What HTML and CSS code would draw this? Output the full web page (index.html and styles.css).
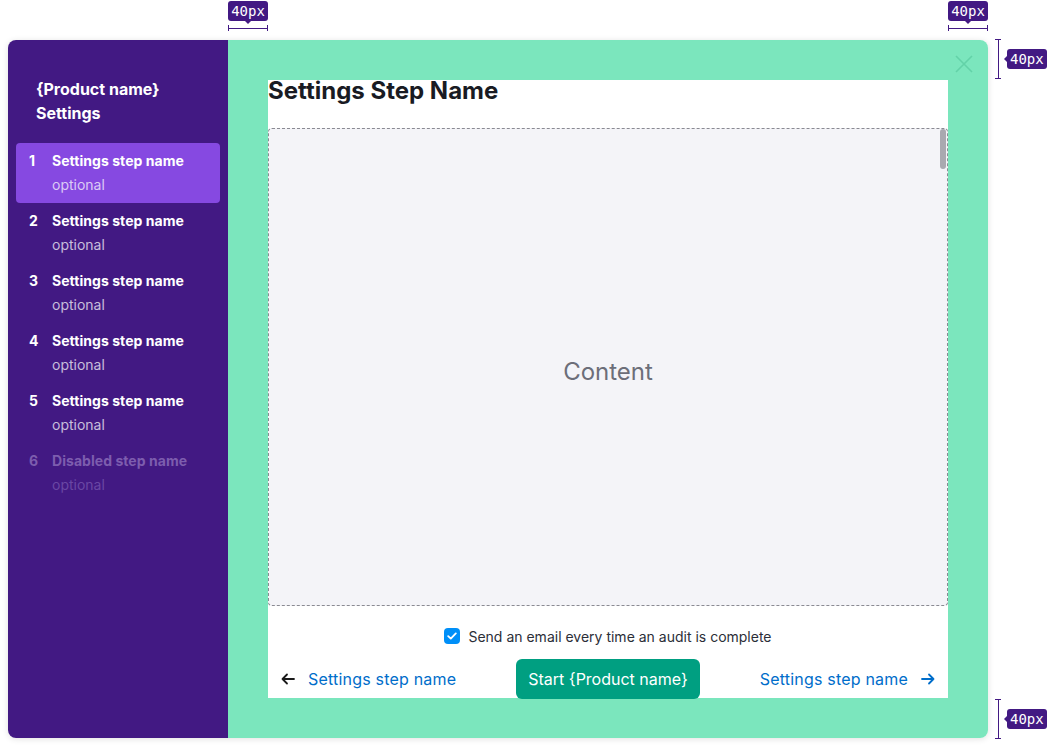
FILE: index.html
```html
<!DOCTYPE html>
<html>
<head>
<meta charset="utf-8">
<link rel="stylesheet" href="styles.css">
</head>
<body>
<div class="page">
  <div class="modal">
    <aside class="sidebar">
      <div class="sb-title">{Product name}<br>Settings</div>
      <ul class="steps">
        <li class="step active"><span class="num">1</span><span class="txt"><span class="name">Settings step name</span><span class="opt">optional</span></span></li>
        <li class="step"><span class="num">2</span><span class="txt"><span class="name">Settings step name</span><span class="opt">optional</span></span></li>
        <li class="step"><span class="num">3</span><span class="txt"><span class="name">Settings step name</span><span class="opt">optional</span></span></li>
        <li class="step"><span class="num">4</span><span class="txt"><span class="name">Settings step name</span><span class="opt">optional</span></span></li>
        <li class="step"><span class="num">5</span><span class="txt"><span class="name">Settings step name</span><span class="opt">optional</span></span></li>
        <li class="step disabled"><span class="num">6</span><span class="txt"><span class="name">Disabled step name</span><span class="opt">optional</span></span></li>
      </ul>
    </aside>
    <main class="panel">
      <button class="close" aria-label="Close">
        <svg width="18" height="18" viewBox="0 0 18 18"><path d="M1 1L17 17M17 1L1 17" stroke="#63d2a8" stroke-width="1.6" fill="none"/></svg>
      </button>
      <div class="inner">
        <h1 class="title">Settings Step Name</h1>
        <div class="content">
          <span class="content-label">Content</span>
          <div class="scrollbar"></div>
        </div>
        <label class="check-row">
          <span class="checkbox"><svg width="10" height="8" viewBox="0 0 10 8"><path d="M1.2 4.2L3.8 6.6L8.8 1.4" stroke="#fff" stroke-width="1.8" fill="none" stroke-linecap="round" stroke-linejoin="round"/></svg></span>
          <span class="check-text">Send an email every time an audit is complete</span>
        </label>
        <div class="actions">
          <a class="link prev"><svg width="16" height="16" viewBox="0 0 16 16"><path d="M14 8H2.5M7 3.5L2.5 8L7 12.5" stroke="#1a1a1a" stroke-width="1.8" fill="none" stroke-linecap="round" stroke-linejoin="round"/></svg><span>Settings step name</span></a>
          <button class="start">Start {Product name}</button>
          <a class="link next"><span>Settings step name</span><svg width="16" height="16" viewBox="0 0 16 16"><path d="M2 8H13.5M9 3.5L13.5 8L9 12.5" stroke="#006dca" stroke-width="1.8" fill="none" stroke-linecap="round" stroke-linejoin="round"/></svg></a>
        </div>
      </div>
    </main>
  </div>

  <div class="anno anno-top anno-top-left">
    <span class="badge badge-down">40px</span>
    <span class="hline"></span>
  </div>
  <div class="anno anno-top anno-top-right">
    <span class="badge badge-down">40px</span>
    <span class="hline"></span>
  </div>
  <div class="anno anno-side anno-side-top">
    <span class="vline"></span>
    <span class="badge badge-left">40px</span>
  </div>
  <div class="anno anno-side anno-side-bottom">
    <span class="vline"></span>
    <span class="badge badge-left">40px</span>
  </div>
</div>
</body>
</html>
```
FILE: styles.css
```css
* { box-sizing: border-box; }
html, body { margin: 0; padding: 0; background: #fff; }
body { font-family: Inter, "Noto Sans", sans-serif; width: 1047px; height: 750px; overflow: hidden; }
.page { position: relative; width: 1047px; height: 750px; padding: 40px 0 0 8px; }

.modal {
  display: flex;
  width: 980px;
  height: 698px;
  border-radius: 8px;
  overflow: hidden;
  box-shadow: 0 1px 6px rgba(0,0,0,0.12);
  position: relative;
}

.sidebar {
  width: 220px;
  flex: none;
  background: #421983;
  color: #fff;
  padding: 37px 8px 0 8px;
}
.sb-title {
  font-size: 16px;
  font-weight: 700;
  line-height: 24px;
  padding-left: 20px;
  margin-bottom: 18px;
}
.steps { list-style: none; margin: 0; padding: 0; }
.step {
  display: flex;
  height: 60px;
  padding: 6px 12px 6px 13px;
  border-radius: 4px;
  font-size: 14px;
  line-height: 24px;
}
.step .num { width: 23px; font-weight: 700; flex: none; }
.step .txt { display: flex; flex-direction: column; }
.step .name { font-weight: 700; letter-spacing: 0.05px; }
.step .opt { color: rgba(255,255,255,0.72); }
.step.active { background: #8649e1; }
.step.disabled { color: #7d5dae; }
.step.disabled .opt { color: #6a47a3; }

.panel {
  flex: 1;
  background: #7be6bd;
  padding: 40px;
  position: relative;
}
.close {
  position: absolute;
  top: 15px;
  right: 15px;
  width: 18px;
  height: 18px;
  padding: 0;
  border: 0;
  background: none;
  display: flex;
}
.inner {
  background: #fff;
  height: 618px;
  display: flex;
  flex-direction: column;
}
.title {
  margin: 0 0 24px 0;
  font-size: 24px;
  line-height: 22px;
  font-weight: 700;
  color: #191b23;
  letter-spacing: 0;
  padding-bottom: 2px;
}
.content {
  flex: 1;
  position: relative;
  background: #f4f4f8;
  border: 1px dashed #8a8a92;
  border-radius: 4px;
  display: flex;
  align-items: center;
  justify-content: center;
}
.content-label { font-size: 24px; color: #6c6e79; padding-top: 8px; }
.scrollbar {
  position: absolute;
  top: 0;
  right: 1px;
  width: 6px;
  height: 40px;
  border-radius: 3px;
  background: #a9a9b0;
}
.check-row {
  margin-top: 20px;
  height: 20px;
  display: flex;
  align-items: center;
  justify-content: center;
  gap: 8px;
  font-size: 14px;
  color: #2b2e38;
}
.checkbox {
  width: 16px;
  height: 16px;
  border-radius: 4px;
  background: #008ff8;
  display: flex;
  align-items: center;
  justify-content: center;
}
.actions {
  margin-top: 12px;
  height: 40px;
  display: grid;
  grid-template-columns: 1fr auto 1fr;
  align-items: center;
  padding-top: 1px;
}
.link {
  display: flex;
  align-items: center;
  gap: 12px;
  color: #006dca;
  font-size: 16px;
  letter-spacing: 0.2px;
}
.link.prev { padding-left: 12px; justify-self: start; }
.link.next { padding-right: 12px; justify-self: end; }
.start {
  height: 40px;
  padding: 0 12px;
  border: 0;
  border-radius: 6px;
  background: #009f81;
  color: #fff;
  font-family: Inter, "Noto Sans", sans-serif;
  font-size: 16px;
  width: 184px;
}

.anno { position: absolute; display: flex; align-items: center; }
.badge {
  position: relative;
  background: #421983;
  color: #fff;
  font-family: "DejaVu Sans Mono", monospace;
  font-size: 14px;
  line-height: 20px;
  height: 20px;
  padding: 0 3px;
  border-radius: 3px;
}
.badge-down::after {
  content: "";
  position: absolute;
  left: 50%;
  bottom: -3px;
  margin-left: -3px;
  border-left: 3px solid transparent;
  border-right: 3px solid transparent;
  border-top: 3px solid #421983;
}
.badge-left::before {
  content: "";
  position: absolute;
  top: 50%;
  left: -3px;
  margin-top: -3px;
  border-top: 3px solid transparent;
  border-bottom: 3px solid transparent;
  border-right: 3px solid #421983;
}
.anno-top { flex-direction: column; width: 40px; top: 1px; gap: 4px; }
.anno-top-left { left: 228px; }
.anno-top-right { left: 948px; }
.hline {
  width: 40px;
  height: 6px;
  border-left: 1px solid #421983;
  border-right: 1px solid #421983;
  background: linear-gradient(#421983, #421983) center / 100% 1px no-repeat;
}
.anno-side { left: 995px; height: 40px; gap: 6px; }
.anno-side-top { top: 39px; }
.anno-side-bottom { top: 699px; }
.vline {
  width: 6px;
  height: 40px;
  border-top: 1px solid #421983;
  border-bottom: 1px solid #421983;
  background: linear-gradient(#421983, #421983) center / 1px 100% no-repeat;
}
```
